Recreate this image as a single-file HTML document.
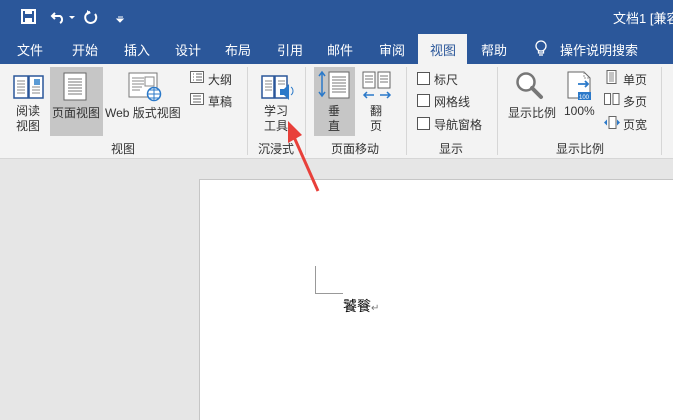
<!DOCTYPE html><html><head><meta charset="utf-8"><style>
body{margin:0;width:673px;height:419px;overflow:hidden;background:#e6e6e6;font-family:"Liberation Sans","Noto Sans CJK SC",sans-serif;font-size:12px;color:#333;position:relative}
.a{position:absolute;white-space:nowrap}
.w{color:#fff}
</style></head><body>
<div class="a" style="left:0;top:0;width:673px;height:64px;background:#2b579a"></div>
<div class="a" style="left:0;top:64px;width:673px;height:94px;background:#f3f3f3;border-bottom:1px solid #d6d6d6"></div>
<!-- QAT -->
<svg class="a" style="left:20px;top:8px" width="120" height="18"><rect x="2" y="2" width="13" height="13" fill="none" stroke="#fff" stroke-width="2"/><rect x="5" y="2" width="7" height="4" fill="#fff"/><rect x="5" y="10" width="7" height="5" fill="#fff"/>
<path d="M35 5 L32 8 L35 11 M32 8 H40 A4 4 0 0 1 40 15" fill="none" stroke="#fff" stroke-width="2"/><path d="M49 8 l3 3 l3 -3z" fill="#fff"/>
<path d="M70 4 A5.5 5.5 0 1 0 75 6" fill="none" stroke="#fff" stroke-width="2"/><path d="M67 2 L71 5 L67 7z" fill="#fff"/>
<path d="M98 9 h5 M97 11 l3 3 l3 -3z" stroke="#fff" fill="#fff"/></svg>
<div class="a w" style="left:613px;top:8px;font-size:13px">文档1 [兼容</div>
<!-- tabs -->
<div class="a" style="left:418px;top:34px;width:49px;height:31px;background:#f3f3f3"></div>
<div class="a w" style="left:17px;top:40px;font-size:13px">文件</div>
<div class="a w" style="left:72px;top:40px;font-size:13px">开始</div>
<div class="a w" style="left:124px;top:40px;font-size:13px">插入</div>
<div class="a w" style="left:175px;top:40px;font-size:13px">设计</div>
<div class="a w" style="left:225px;top:40px;font-size:13px">布局</div>
<div class="a w" style="left:277px;top:40px;font-size:13px">引用</div>
<div class="a w" style="left:327px;top:40px;font-size:13px">邮件</div>
<div class="a w" style="left:379px;top:40px;font-size:13px">审阅</div>
<div class="a" style="left:430px;top:40px;font-size:13px;color:#2b579a">视图</div>
<div class="a w" style="left:481px;top:40px;font-size:13px">帮助</div>
<svg class="a" style="left:534px;top:40px" width="14" height="18"><circle cx="7" cy="6" r="5" fill="none" stroke="#fff" stroke-width="1.3"/><path d="M4.5 10v3h5v-3M5 15h4" stroke="#fff" fill="none" stroke-width="1.3"/></svg>
<div class="a w" style="left:560px;top:40px;font-size:13px">操作说明搜索</div>
<!-- ribbon -->
<div class="a" style="left:50px;top:67px;width:53px;height:69px;background:#c6c6c6"></div>
<div class="a" style="left:314px;top:67px;width:41px;height:69px;background:#c6c6c6"></div>
<svg class="a" style="left:12px;top:72px" width="34" height="28"><path d="M2 4h14v22H2zM17 4h14v22H17z" fill="#fff" stroke="#2b579a" stroke-width="1.5"/><path d="M5 9h8M5 12h8M5 15h8M5 18h8M5 21h8M20 15h8M20 18h8M20 21h8" stroke="#888"/><rect x="22" y="7" width="6" height="6" fill="#5b9bd5"/></svg>
<div class="a" style="left:16px;top:104px;font-size:12px;line-height:15px">阅读<br>视图</div>
<svg class="a" style="left:63px;top:72px" width="26" height="30"><rect x="1" y="1" width="22" height="27" fill="#fff" stroke="#666"/><path d="M5 7h14M5 10h14M5 13h14M5 16h14M5 19h14M5 22h14" stroke="#777"/></svg>
<div class="a" style="left:52px;top:104px">页面视图</div>
<svg class="a" style="left:128px;top:72px" width="36" height="30"><rect x="1" y="1" width="28" height="24" fill="#fff" stroke="#777"/><path d="M4 6h12M4 9h12M4 12h12M4 15h10M4 18h8" stroke="#888"/><rect x="17" y="5" width="9" height="9" fill="none" stroke="#888"/><circle cx="26" cy="22" r="6.5" fill="#fff" stroke="#2b79c9" stroke-width="1.5"/><path d="M19.5 22h13M26 15.5v13M21 18h10M21 26h10" stroke="#2b79c9"/></svg>
<div class="a" style="left:105px;top:104px">Web 版式视图</div>
<svg class="a" style="left:190px;top:71px" width="14" height="12"><rect x="0.5" y="0.5" width="13" height="11" fill="#fff" stroke="#666"/><path d="M3 3h1M6 3h6M3 6h1M6 6h6M3 9h1M6 9h6" stroke="#666"/></svg>
<div class="a" style="left:208px;top:71px">大纲</div>
<svg class="a" style="left:190px;top:93px" width="14" height="12"><rect x="0.5" y="0.5" width="13" height="11" fill="#fff" stroke="#666"/><path d="M3 3h8M3 6h8M3 9h8" stroke="#666"/></svg>
<div class="a" style="left:208px;top:93px">草稿</div>
<div class="a" style="left:111px;top:140px">视图</div>
<div class="a" style="left:247px;top:67px;width:1px;height:88px;background:#d6d6d6"></div>
<svg class="a" style="left:260px;top:72px" width="34" height="30"><path d="M2 4h12v22H2zM15 4h12v22H15z" fill="#fff" stroke="#2b579a" stroke-width="1.5"/><path d="M5 9h7M5 12h7M5 15h7M5 18h7M18 9h7M18 12h7" stroke="#888"/><path d="M20 17h4l5-5v16l-5-5h-4z" fill="#2b79c9"/><path d="M31 15a5 5 0 0 1 0 8" stroke="#2b79c9" fill="none"/></svg>
<div class="a" style="left:264px;top:104px;line-height:15px">学习<br>工具</div>
<div class="a" style="left:258px;top:140px">沉浸式</div>
<div class="a" style="left:305px;top:67px;width:1px;height:88px;background:#d6d6d6"></div>
<svg class="a" style="left:318px;top:70px" width="34" height="32"><path d="M4 2v24M1 6l3-4 3 4M1 22l3 4 3-4" stroke="#2b79c9" fill="none" stroke-width="1.5"/><rect x="11" y="2" width="20" height="26" fill="#fff" stroke="#666"/><path d="M14 7h14M14 10h14M14 13h14M14 16h14M14 19h14M14 22h14" stroke="#777"/></svg>
<div class="a" style="left:328px;top:104px;line-height:15px">垂<br>直</div>
<svg class="a" style="left:362px;top:70px" width="30" height="30"><rect x="1" y="2" width="12" height="16" fill="#fff" stroke="#666"/><rect x="16" y="2" width="12" height="16" fill="#fff" stroke="#666"/><path d="M3 6h8M3 9h8M3 12h8M18 6h8M18 9h8M18 12h8" stroke="#777"/><path d="M2 25h10M5 22l-3 3 3 3M18 25h10M25 22l3 3-3 3" stroke="#2b79c9" stroke-width="1.5" fill="none"/></svg>
<div class="a" style="left:370px;top:104px;line-height:15px">翻<br>页</div>
<div class="a" style="left:331px;top:140px">页面移动</div>
<div class="a" style="left:406px;top:67px;width:1px;height:88px;background:#d6d6d6"></div>
<div class="a" style="left:417px;top:72px;width:11px;height:11px;border:1px solid #555;background:#fff"></div><div class="a" style="left:434px;top:71px">标尺</div>
<div class="a" style="left:417px;top:94px;width:11px;height:11px;border:1px solid #555;background:#fff"></div><div class="a" style="left:434px;top:93px">网格线</div>
<div class="a" style="left:417px;top:117px;width:11px;height:11px;border:1px solid #555;background:#fff"></div><div class="a" style="left:434px;top:116px">导航窗格</div>
<div class="a" style="left:439px;top:140px">显示</div>
<div class="a" style="left:497px;top:67px;width:1px;height:88px;background:#d6d6d6"></div>
<svg class="a" style="left:515px;top:71px" width="32" height="30"><circle cx="11" cy="11" r="8.5" fill="#fff" stroke="#777" stroke-width="2.5"/><path d="M17 17l9 9" stroke="#777" stroke-width="4" stroke-linecap="round"/></svg>
<div class="a" style="left:508px;top:104px">显示比例</div>
<svg class="a" style="left:566px;top:70px" width="30" height="32"><path d="M2 2h16l6 6v20H2z" fill="#fff" stroke="#666"/><path d="M18 2v6h6" stroke="#999" stroke-dasharray="2 1" fill="none"/><path d="M12 14h10M19 11l3 3-3 3" stroke="#2b79c9" stroke-width="1.8" fill="none"/><rect x="12" y="22" width="13" height="8" fill="#2b79c9"/><text x="13" y="29" font-size="6" fill="#fff" font-family="Liberation Sans">100</text></svg>
<div class="a" style="left:564px;top:104px">100%</div>
<svg class="a" style="left:606px;top:70px" width="12" height="14"><rect x="1" y="0.5" width="9" height="13" fill="#fff" stroke="#666"/><path d="M3 3h5M3 5h5M3 7h5M3 9h5M3 11h5" stroke="#888"/></svg>
<div class="a" style="left:623px;top:71px">单页</div>
<svg class="a" style="left:604px;top:93px" width="16" height="12"><rect x="0.5" y="0.5" width="6" height="11" fill="#fff" stroke="#666"/><rect x="9" y="0.5" width="6" height="11" fill="#fff" stroke="#666"/></svg>
<div class="a" style="left:623px;top:93px">多页</div>
<svg class="a" style="left:604px;top:116px" width="16" height="13"><rect x="5" y="0.5" width="7" height="12" fill="#fff" stroke="#666"/><path d="M0 6.5l3-3v6zM16 6.5l-3-3v6z" fill="#2b79c9"/></svg>
<div class="a" style="left:623px;top:116px">页宽</div>
<div class="a" style="left:556px;top:140px">显示比例</div>
<div class="a" style="left:661px;top:67px;width:1px;height:88px;background:#d6d6d6"></div>
<!-- page -->
<div class="a" style="left:199px;top:179px;width:474px;height:240px;background:#fff;border-left:1px solid #c6c6c6;border-top:1px solid #c6c6c6"></div>
<div class="a" style="left:315px;top:266px;width:1px;height:28px;background:#999"></div>
<div class="a" style="left:315px;top:293px;width:28px;height:1px;background:#999"></div>
<div class="a" style="left:343px;top:296px;font-size:14px;color:#000">饕餮<span style="font-size:10px;color:#777">↵</span></div>
<!-- arrow -->
<svg class="a" style="left:280px;top:115px" width="50" height="80"><path d="M38 76L14 22" stroke="#e8403a" stroke-width="3"/><path d="M8 6L22 20L8 28z" fill="#e8403a"/></svg>
</body></html>
